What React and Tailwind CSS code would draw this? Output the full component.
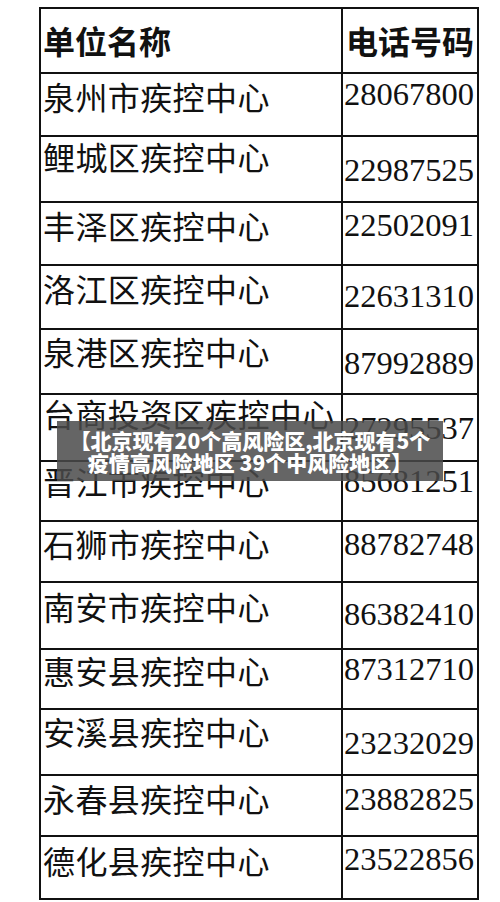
import React from "react";

const rows = [
  { name: "泉州市疾控中心", phone: "28067800", h: "h-[63px]", np: "pt-[6px]", pp: "pt-[4px]" },
  { name: "鲤城区疾控中心", phone: "22987525", h: "h-[66px]", np: "pt-[3px]", pp: "pt-[17px]" },
  { name: "丰泽区疾控中心", phone: "22502091", h: "h-[63px]", np: "pt-[6px]", pp: "pt-[6px]" },
  { name: "洛江区疾控中心", phone: "22631310", h: "h-[64px]", np: "pt-[6px]", pp: "pt-[14px]" },
  { name: "泉港区疾控中心", phone: "87992889", h: "h-[65px]", np: "pt-[5px]", pp: "pt-[17px]" },
  { name: "台商投资区疾控中心", phone: "27295537", h: "h-[67px]", np: "pt-[2px]", pp: "pt-[17px]" },
  { name: "晋江市疾控中心", phone: "85681251", h: "h-[60px]", np: "pt-[3px]", pp: "pt-[3px]" },
  { name: "石狮市疾控中心", phone: "88782748", h: "h-[61px]", np: "pt-[5px]", pp: "pt-[6px]" },
  { name: "南安市疾控中心", phone: "86382410", h: "h-[67px]", np: "pt-[7px]", pp: "pt-[15px]" },
  { name: "惠安县疾控中心", phone: "87312710", h: "h-[60px]", np: "pt-[4px]", pp: "pt-[3px]" },
  { name: "安溪县疾控中心", phone: "23232029", h: "h-[66px]", np: "pt-[5px]", pp: "pt-[17px]" },
  { name: "永春县疾控中心", phone: "23882825", h: "h-[61px]", np: "pt-[6px]", pp: "pt-[7px]" },
  { name: "德化县疾控中心", phone: "23522856", h: "h-[61px]", np: "pt-[7px]", pp: "pt-[6px]" },
];

const cjk = "font-['Noto_Sans_CJK_SC',sans-serif]";

const App = () => {
  return (
    <div className="relative w-[500px] h-[902px] bg-white overflow-hidden">
      {/* table */}
      <div className="ml-[39px] mt-[7px] w-[440px] border-2 border-[#111] text-[#111]">
        <div className="flex h-[65px] border-b-2 border-[#111]">
          <div className={`w-[300px] pl-[2px] pt-[15px] text-[32px] leading-[32px] font-bold ${cjk}`}>
            单位名称
          </div>
          <div className={`flex-1 border-l-2 border-[#111] pl-[3px] pt-[15px] text-[32px] leading-[32px] font-bold ${cjk}`}>
            电话号码
          </div>
        </div>
        {rows.map((row, i) => (
          <div
            key={i}
            className={`flex ${row.h} ${i < rows.length - 1 ? "border-b-2 border-[#111]" : ""}`}
          >
            <div
              className={`w-[300px] pl-[2px] ${row.np} text-[32px] leading-[32px] tracking-[0.4px] whitespace-nowrap ${cjk}`}
            >
              {row.name}
            </div>
            <div
              className={`flex-1 border-l-2 border-[#111] pl-[1px] ${row.pp} text-[32.5px] leading-[32px] whitespace-nowrap font-['Liberation_Serif',serif]`}
            >
              {row.phone}
            </div>
          </div>
        ))}
      </div>

      {/* caption overlay */}
      <div className="absolute left-[57px] top-[421px] w-[386px] h-[60px] bg-[#4a4a4a]/85 flex items-center justify-center">
        <p className={`text-white text-[21px] leading-[22px] font-black text-center whitespace-nowrap ${cjk}`}>
          【北京现有20个高风险区,北京现有5个
          <br />
          疫情高风险地区 39个中风险地区】
        </p>
      </div>
    </div>
  );
};

export default App;
